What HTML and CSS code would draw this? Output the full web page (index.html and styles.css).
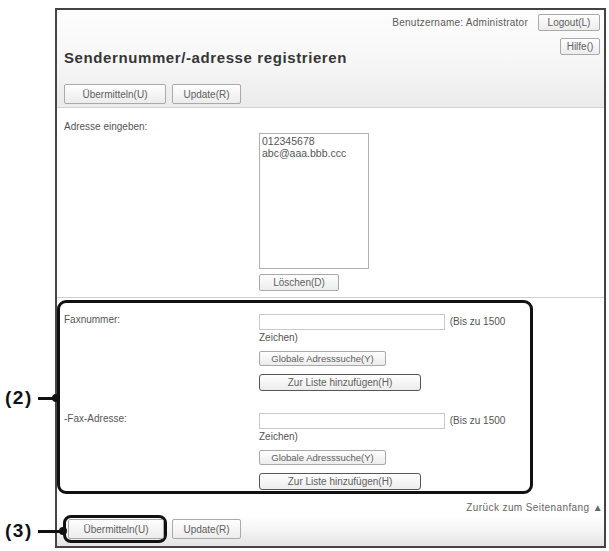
FILE: index.html
```html
<!DOCTYPE html>
<html lang="de">
<head>
<meta charset="utf-8">
<title>Sendernummer/-adresse registrieren</title>
<link rel="stylesheet" href="styles.css">
</head>
<body>
<div class="page">
  <div class="callout c2"><span class="num">(2)</span><span class="lead"></span><span class="dot"></span></div>
  <div class="callout c3"><span class="num">(3)</span><span class="lead long"></span><span class="dot"></span></div>

  <div class="frame">
    <div class="header">
      <div class="userbar">
        <span class="user">Benutzername: Administrator</span>
        <button class="btn b-logout">Logout(L)</button>
      </div>
      <div class="titlerow">
        <h1 class="title">Sendernummer/-adresse registrieren</h1>
        <button class="btn b-help">Hilfe()</button>
      </div>
      <div class="actions">
        <button class="btn b-submit">Übermitteln(U)</button>
        <button class="btn b-update">Update(R)</button>
      </div>
    </div>

    <div class="addr">
      <div class="label">Adresse eingeben:</div>
      <div class="addr-field">
        <div class="listbox">
          <div>012345678</div>
          <div>abc@aaa.bbb.ccc</div>
        </div>
        <button class="btn b-del">Löschen(D)</button>
      </div>
    </div>

    <div class="entry">
      <div class="entry-row">
        <div class="label elabel">Faxnummer:</div>
        <div class="efield">
          <div class="limit"><input class="textbox" type="text"> (Bis zu 1500 Zeichen)</div>
          <button class="btn b-global">Globale Adresssuche(Y)</button>
          <button class="btn b-add">Zur Liste hinzufügen(H)</button>
        </div>
      </div>
      <div class="entry-row second">
        <div class="label elabel">-Fax-Adresse:</div>
        <div class="efield">
          <div class="limit"><input class="textbox" type="text"> (Bis zu 1500 Zeichen)</div>
          <button class="btn b-global">Globale Adresssuche(Y)</button>
          <button class="btn b-add">Zur Liste hinzufügen(H)</button>
        </div>
      </div>
    </div>

    <div class="toplink">Zurück zum Seitenanfang ▲</div>

    <div class="footer">
      <div class="actions foot-actions">
        <span class="hl"><button class="btn b-submit2">Übermitteln(U)</button></span>
        <button class="btn b-update">Update(R)</button>
      </div>
    </div>
  </div>
</div>
</body>
</html>
```

FILE: styles.css
```css
body {
  margin: 0;
  background: #fff;
  font-family: "Liberation Sans", Arial, sans-serif;
  color: #555;
}

.page {
  position: relative;
  width: 609px;
  height: 551px;
  overflow: hidden;
}

/* annotation callouts */
.callout {
  position: absolute;
  left: 5px;
  z-index: 2;
  display: flex;
  align-items: center;
}
.c2 { top: 388px; }
.c3 { top: 521px; }
.num {
  font-size: 19px;
  line-height: 20px;
  font-weight: bold;
  color: #111;
  letter-spacing: 1.5px;
  width: 33px;
}
.lead {
  display: block;
  width: 18px;
  height: 3px;
  background: #111;
}
.lead.long { width: 25px; }
.dot {
  display: block;
  width: 8px;
  height: 8px;
  border-radius: 50%;
  background: #111;
  margin-left: -4px;
}

/* window frame */
.frame {
  box-sizing: border-box;
  margin: 8px 0 0 55px;
  width: 551px;
  height: 540px;
  border: 2px solid #444;
  overflow: hidden;
  display: flex;
  flex-direction: column;
  background: #fff;
}

.btn {
  box-sizing: border-box;
  font-family: "Liberation Sans", Arial, sans-serif;
  font-size: 10px;
  color: #606060;
  background: linear-gradient(#fefefe, #ececec);
  border: 1px solid #a9a9a9;
  border-radius: 2px;
  padding: 0;
  margin: 0;
  height: 20px;
  display: block;
}

/* header */
.header {
  box-sizing: border-box;
  height: 98px;
  flex: none;
  background: linear-gradient(#fdfdfd, #f6f6f6 55%, #ebebeb);
  border-bottom: 1px solid #d2d2d2;
}
.userbar {
  display: flex;
  justify-content: flex-end;
  align-items: center;
  gap: 10px;
  padding: 4px 4px 0 0;
}
.user {
  font-size: 10px;
  color: #5a5a5a;
  letter-spacing: 0.25px;
}
.b-logout { width: 62px; height: 17px; }
.titlerow {
  box-sizing: border-box;
  height: 53px;
  display: flex;
  justify-content: space-between;
  align-items: flex-start;
  padding: 7px 4px 0 7px;
}
.title {
  margin: 11px 0 0;
  font-size: 15px;
  line-height: 18px;
  font-weight: bold;
  color: #363636;
  letter-spacing: 0.6px;
}
.b-help { width: 40px; height: 17px; }
.actions {
  display: flex;
  align-items: center;
  gap: 6px;
  padding: 0 7px;
}
.b-submit { width: 102px; }
.b-update { width: 69px; }

/* address list */
.label {
  font-size: 10px;
  line-height: 14px;
  color: #555;
}
.addr {
  flex: none;
  display: grid;
  grid-template-columns: 195px 1fr;
  padding: 12px 0 6px 7px;
  border-bottom: 1px solid #cfcfcf;
}
.addr-field { margin-top: 13px; }
.listbox {
  box-sizing: border-box;
  width: 110px;
  height: 136px;
  border: 1px solid #b0b0b0;
  padding: 1px 2px;
  font-size: 10.5px;
  line-height: 12px;
  color: #555;
}
.b-del { width: 80px; height: 17px; margin-top: 5px; }

/* highlighted entry block */
.entry {
  flex: none;
  box-sizing: border-box;
  margin-top: 2px;
  width: 476px;
  height: 194px;
  border: 3px solid #111;
  border-radius: 9px;
  padding-top: 11px;
  overflow: hidden;
}
.entry-row {
  display: grid;
  grid-template-columns: 199px 1fr;
}
.entry-row.second { margin-top: 22px; }
.elabel {
  padding-left: 4px;
  line-height: 12px;
}
.efield {
  width: 262px;
}
.limit {
  font-size: 10px;
  line-height: 16px;
  color: #555;
}
.textbox {
  box-sizing: border-box;
  width: 186px;
  height: 16px;
  border: 1px solid #c8c8c8;
  margin: 0 2px 0 0;
  padding: 0;
  vertical-align: top;
  background: #fff;
}
.b-global { width: 127px; height: 15px; margin-top: 5px; font-size: 9.5px; }
.b-add {
  width: 162px;
  height: 17px;
  margin-top: 8px;
  border-color: #555;
  border-radius: 3px;
}

/* footer */
.toplink {
  flex: none;
  margin-top: 7px;
  padding-right: 1px;
  font-size: 10px;
  line-height: 14px;
  color: #666;
  letter-spacing: 0.4px;
  text-align: right;
  white-space: nowrap;
}
.footer {
  flex: 1;
  background: linear-gradient(#ffffff, #f4f4f4 50%, #e4e4e4);
}
.foot-actions {
  padding: 0 6px;
  gap: 5px;
}
.hl {
  display: flex;
  border: 3px solid #111;
  border-radius: 8px;
  padding: 1px 0 1px 2px;
}
.b-submit2 { width: 96px; }
```
